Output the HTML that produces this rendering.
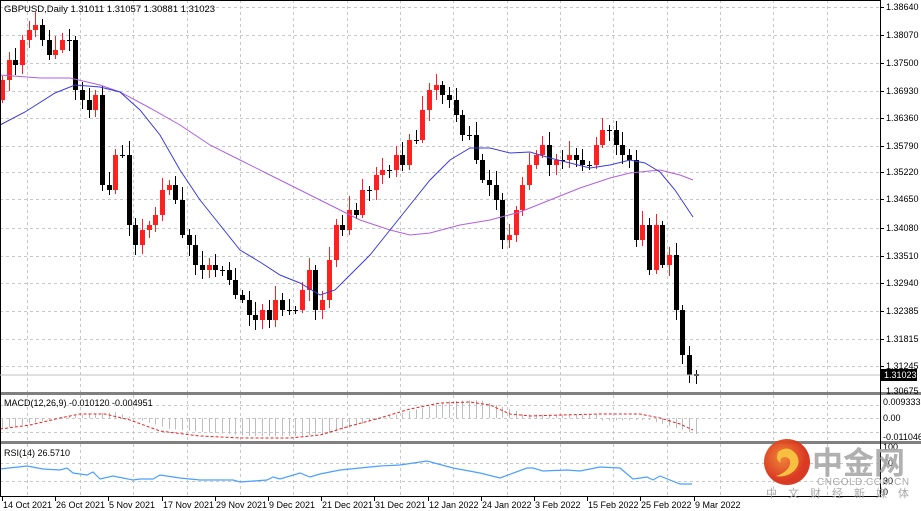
<!DOCTYPE html>
<html><head><meta charset="utf-8"><style>
body{margin:0;background:#fff;width:921px;height:511px;overflow:hidden}
svg{display:block}
text{font-family:"Liberation Sans",sans-serif;font-size:9px;fill:#000}
</style></head><body>
<svg id="s" width="921" height="511" xmlns="http://www.w3.org/2000/svg">
<rect x="0" y="0" width="921" height="511" fill="#fff"/>
<g id="grid" stroke="#c8c8c8" stroke-dasharray="3,3" stroke-width="1"></g>
<g id="cand"></g>
<polyline fill="none" stroke="#b060e0" stroke-width="1" points="0,75 40,78 70,78 100,85 120,92 150,108 180,125 210,145 240,160 270,175 300,190 330,205 360,220 390,230 410,235 430,233 460,225 490,220 520,212 550,200 580,188 610,178 630,173 660,170 680,175 693,180"/>
<polyline fill="none" stroke="#3a3ae0" stroke-width="1" points="0,125 25,112 55,93 75,85 100,87 120,92 140,110 160,135 180,170 200,200 220,225 240,250 260,262 280,275 300,283 320,295 335,290 350,275 370,255 390,230 410,205 430,180 450,160 470,148 490,148 510,153 530,152 550,158 570,163 590,168 610,165 630,160 645,163 660,172 675,190 693,217"/>
<g id="hist" stroke="#bdbdbd" stroke-width="1"></g>
<polyline fill="none" stroke="#ee2222" stroke-width="1" stroke-dasharray="3,2" points="0,429 30,425 60,418 80,414 105,414 130,420 160,431 200,436 240,438 290,438 320,435 350,426 380,418 410,409 440,403 470,402 490,405 510,414 530,416 560,415 600,414 640,414 660,418 680,424 693,430"/>
<polyline fill="none" stroke="#4aa0ff" stroke-width="1.2" points="0,469 27,466 43,469 60,470 67,468 73,473 87,475 93,472 100,479 113,476 133,480 140,479 153,479 160,475 180,478 200,480 233,480 240,482 267,480 273,477 280,479 300,473 310,477 320,474 340,470 360,468 380,466 400,465 427,461 453,468 480,473 500,478 527,468 533,468 543,471 567,470 580,471 600,467 620,468 633,479 647,477 653,480 660,476 680,484 692,484"/>
<rect x="0" y="392" width="921" height="3" fill="#808080"/>
<rect x="0" y="441" width="921" height="3" fill="#808080"/>
<rect x="0" y="496" width="881" height="1" fill="#000"/>
<rect x="880" y="0" width="1" height="497" fill="#000"/>
<rect x="0" y="0" width="1" height="497" fill="#000"/>
<rect x="0" y="0" width="881" height="1" fill="#000"/>
<line x1="0" y1="375" x2="880" y2="375" stroke="#c0c0c0"/>
<g id="axis"></g>
<rect x="881" y="369" width="36" height="12" fill="#000"/>
<text x="884" y="378" style="fill:#fff">1.31023</text>
<text x="4" y="12" style="font-size:9.5px">GBPUSD,Daily  1.31011 1.31057 1.30881 1.31023</text>
<text x="4" y="406">MACD(12,26,9) -0.010120 -0.004951</text>
<text x="4" y="456">RSI(14) 26.5710</text>
<text x="883" y="405">0.009333</text>
<text x="883" y="421">0.00</text>
<text x="883" y="440">-0.011046</text>
<text x="883" y="450">100</text>
<text x="883" y="466">70</text>
<text x="883" y="484">30</text>
<text x="883" y="495">0</text>
<defs><radialGradient id="g" cx="40%" cy="40%"><stop offset="0" stop-color="#f08030"/><stop offset="1" stop-color="#d83018"/></radialGradient></defs>
<circle cx="787" cy="462" r="23" fill="url(#g)" opacity="0.95"/>
<path d="M778,452 q10,-8 18,2 q6,9 -2,17 q-8,7 -18,5 q12,-4 14,-12 q1,-7 -6,-7 q-5,1 -3,6 q-6,-3 -3,-11z" fill="#f8c040"/>
<text x="812" y="474" style="font-family:'Noto Sans CJK SC',sans-serif;font-size:31px;font-weight:bold;fill:#a8a8a8;opacity:0.9">中金网</text>
<text x="817" y="485" style="font-size:10px;fill:#a8a8a8;letter-spacing:0.5px">CNGOLD.COM.CN</text>
<text x="766" y="497" style="font-family:'Noto Sans CJK SC',sans-serif;font-size:11px;fill:#a8a8a8;letter-spacing:11px">中文财经新媒体</text>
</svg>
<script>
var NS="http://www.w3.org/2000/svg";
function el(p,t,a,txt){var e=document.createElementNS(NS,t);for(var k in a)e.setAttribute(k,a[k]);if(txt)e.textContent=txt;document.getElementById(p).appendChild(e);return e;}
var hy=[7,35,63,91,118,146,172,199,228,256,283,311,339,366];
hy.forEach(function(y){el('grid','line',{x1:0,x2:880,y1:y+0.5,y2:y+0.5});});
[405,418,432,463,481].forEach(function(y){el('grid','line',{x1:0,x2:880,y1:y+0.5,y2:y+0.5});});
for(var x=26.7;x<880;x+=53.33){var xx=Math.round(x)+0.5;el('grid','line',{x1:xx,x2:xx,y1:0,y2:392});el('grid','line',{x1:xx,x2:xx,y1:395,y2:441});el('grid','line',{x1:xx,x2:xx,y1:444,y2:496});}
var pl=["1.38640","1.38070","1.37500","1.36930","1.36360","1.35790","1.35220","1.34650","1.34080","1.33510","1.32940","1.32385","1.31815","1.31245"];
hy.forEach(function(y,i){el('axis','line',{x1:880,x2:884,y1:y+.5,y2:y+.5,stroke:'#000'});el('axis','text',{x:886,y:y+3},pl[i]);});
el('axis','text',{x:886,y:394},"1.30675");
var dl=["14 Oct 2021","26 Oct 2021","5 Nov 2021","17 Nov 2021","29 Nov 2021","9 Dec 2021","21 Dec 2021","31 Dec 2021","12 Jan 2022","24 Jan 2022","3 Feb 2022","15 Feb 2022","25 Feb 2022","9 Mar 2022"];
dl.forEach(function(d,i){var x=Math.round(2+i*53.2);el('axis','line',{x1:x+.5,x2:x+.5,y1:497,y2:501,stroke:'#000'});el('axis','text',{x:x+1,y:508},d);});
var c=[80,60,65,40,30,25,40,55,50,40,40,90,100,110,95,185,190,155,155,225,245,230,225,215,190,185,200,235,245,265,270,265,270,270,280,295,300,315,320,310,320,300,310,310,310,290,270,310,300,260,225,230,210,215,190,190,175,170,170,155,165,140,140,110,90,85,95,100,115,135,135,160,180,185,200,240,235,210,185,165,155,145,165,160,160,155,160,165,165,145,130,130,145,155,160,240,225,270,225,265,255,310,355,375,376];
var prev=100;
for(var i=0;i<c.length;i++){var x=Math.round(2+i*6.67);var o=prev,cl=c[i];var r=((i*37)%11);
var hi=Math.min(o,cl)-4-r,lo=Math.max(o,cl)+3+((i*53)%9);
if(i==c.length-1){o=374;cl=376;hi=370;lo=384;}
var bull=cl<o;var col=bull?'#ff2020':'#000';
el('cand','line',{x1:x+.5,x2:x+.5,y1:hi,y2:lo,stroke:col});
var h=Math.max(1,Math.abs(cl-o));el('cand','rect',{x:x-2,y:Math.min(o,cl),width:5,height:h,fill:col});
prev=cl;}
var sig=[[0,429],[60,418],[105,414],[160,431],[240,438],[290,438],[320,435],[380,418],[440,403],[470,402],[510,414],[560,415],[640,414],[693,430]];
function sv(x){for(var k=0;k<sig.length-1;k++){if(x<=sig[k+1][0]){var a=sig[k],b=sig[k+1];return a[1]+(b[1]-a[1])*(x-a[0])/(b[0]-a[0]);}}return 430;}
for(var i=0;i<c.length;i++){var x=Math.round(2+i*6.67)+.5;var v=sv(x-10);var y2=v+(x>600?6:(x>520?0:-2));el('hist','line',{x1:x,x2:x,y1:418,y2:y2});}
</script>
</body></html>
